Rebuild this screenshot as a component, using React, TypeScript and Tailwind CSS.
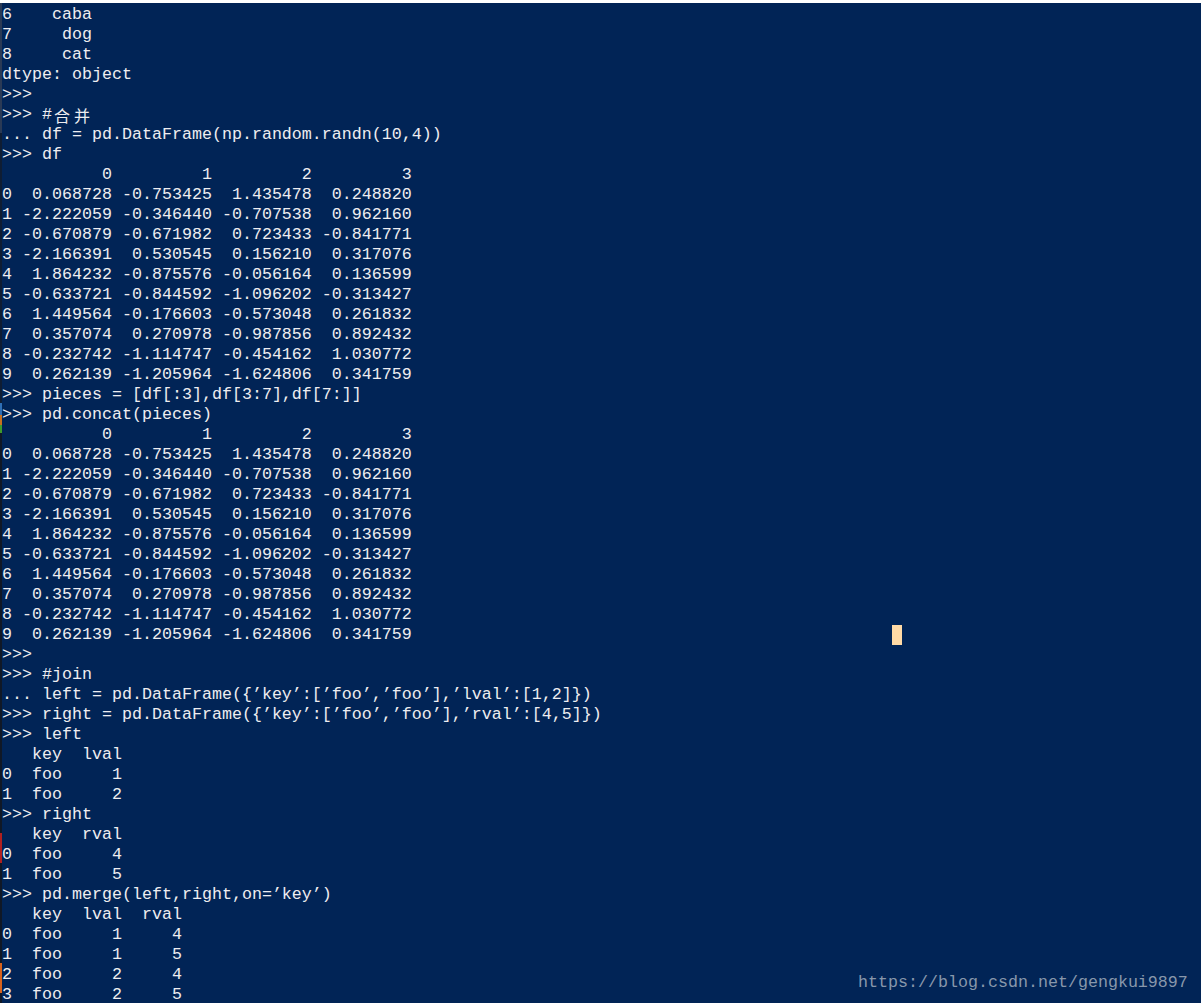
import React from "react";

const lines: string[] = [
  "6    caba",
  "7     dog",
  "8     cat",
  "dtype: object",
  ">>>",
  "__CJK__",
  "... df = pd.DataFrame(np.random.randn(10,4))",
  ">>> df",
  "          0         1         2         3",
  "0  0.068728 -0.753425  1.435478  0.248820",
  "1 -2.222059 -0.346440 -0.707538  0.962160",
  "2 -0.670879 -0.671982  0.723433 -0.841771",
  "3 -2.166391  0.530545  0.156210  0.317076",
  "4  1.864232 -0.875576 -0.056164  0.136599",
  "5 -0.633721 -0.844592 -1.096202 -0.313427",
  "6  1.449564 -0.176603 -0.573048  0.261832",
  "7  0.357074  0.270978 -0.987856  0.892432",
  "8 -0.232742 -1.114747 -0.454162  1.030772",
  "9  0.262139 -1.205964 -1.624806  0.341759",
  ">>> pieces = [df[:3],df[3:7],df[7:]]",
  ">>> pd.concat(pieces)",
  "          0         1         2         3",
  "0  0.068728 -0.753425  1.435478  0.248820",
  "1 -2.222059 -0.346440 -0.707538  0.962160",
  "2 -0.670879 -0.671982  0.723433 -0.841771",
  "3 -2.166391  0.530545  0.156210  0.317076",
  "4  1.864232 -0.875576 -0.056164  0.136599",
  "5 -0.633721 -0.844592 -1.096202 -0.313427",
  "6  1.449564 -0.176603 -0.573048  0.261832",
  "7  0.357074  0.270978 -0.987856  0.892432",
  "8 -0.232742 -1.114747 -0.454162  1.030772",
  "__CURSOR__",
  ">>>",
  ">>> #join",
  "... left = pd.DataFrame({\u2019key\u2019:[\u2019foo\u2019,\u2019foo\u2019],\u2019lval\u2019:[1,2]})",
  ">>> right = pd.DataFrame({\u2019key\u2019:[\u2019foo\u2019,\u2019foo\u2019],\u2019rval\u2019:[4,5]})",
  ">>> left",
  "   key  lval",
  "0  foo     1",
  "1  foo     2",
  ">>> right",
  "   key  rval",
  "0  foo     4",
  "1  foo     5",
  ">>> pd.merge(left,right,on=\u2019key\u2019)",
  "   key  lval  rval",
  "0  foo     1     4",
  "1  foo     1     5",
  "2  foo     2     4",
  "3  foo     2     5",
];

const cursorRow = "9  0.262139 -1.205964 -1.624806  0.341759";

function Line({ text }: { text: string }) {
  if (text === "__CJK__") {
    return (
      <div className="h-[20px] whitespace-pre">
        {">>> #"}
        <span className="inline-block w-[20px] h-[20px] align-top text-center text-[16px] leading-[20px] [font-family:'Noto_Sans_CJK_SC',sans-serif]">合</span>
        <span className="inline-block w-[20px] h-[20px] align-top text-center text-[16px] leading-[20px] [font-family:'Noto_Sans_CJK_SC',sans-serif]">并</span>
      </div>
    );
  }
  if (text === "__CURSOR__") {
    const pad = " ".repeat(89 - cursorRow.length);
    return (
      <div className="h-[20px] whitespace-pre">
        {cursorRow + pad}
        <span className="inline-block w-[10px] h-[20px] align-top bg-[#ffdaa6]"></span>
      </div>
    );
  }
  return <div className="h-[20px] whitespace-pre">{text || " "}</div>;
}

export default function App() {
  return (
    <div className="relative w-[1201px] h-[1003px] overflow-hidden bg-[#012456]">
      <div className="h-[3px] bg-white" />
      <div className="flex h-[1000px]">
        <div className="w-[2px] flex flex-col shrink-0">
          <div className="h-[130px] bg-[#2a3a55]" />
          <div className="h-[270px] bg-[#0f1d33]" />
          <div className="h-[12px] bg-[#2f6fb5]" />
          <div className="h-[10px] bg-[#c8701e]" />
          <div className="h-[8px] bg-[#3f9a2c]" />
          <div className="h-[400px] bg-[#101826]" />
          <div className="h-[30px] bg-[#b02020]" />
          <div className="h-[100px] bg-[#101826]" />
          <div className="h-[30px] bg-[#d8631c]" />
          <div className="flex-1 bg-[#101826]" />
        </div>
        <div className="pt-[2px] text-[#eeedf0] text-[16.67px] leading-[20px] [font-family:'Liberation_Mono',monospace]">
          {lines.map((l, i) => (
            <Line key={i} text={l} />
          ))}
        </div>
      </div>
      <div className="absolute left-[858px] top-[973px] h-[20px] whitespace-pre text-[16.67px] leading-[20px] text-[#8897ab] [font-family:'Liberation_Mono',monospace]">
        https://blog.csdn.net/gengkui9897
      </div>
    </div>
  );
}
